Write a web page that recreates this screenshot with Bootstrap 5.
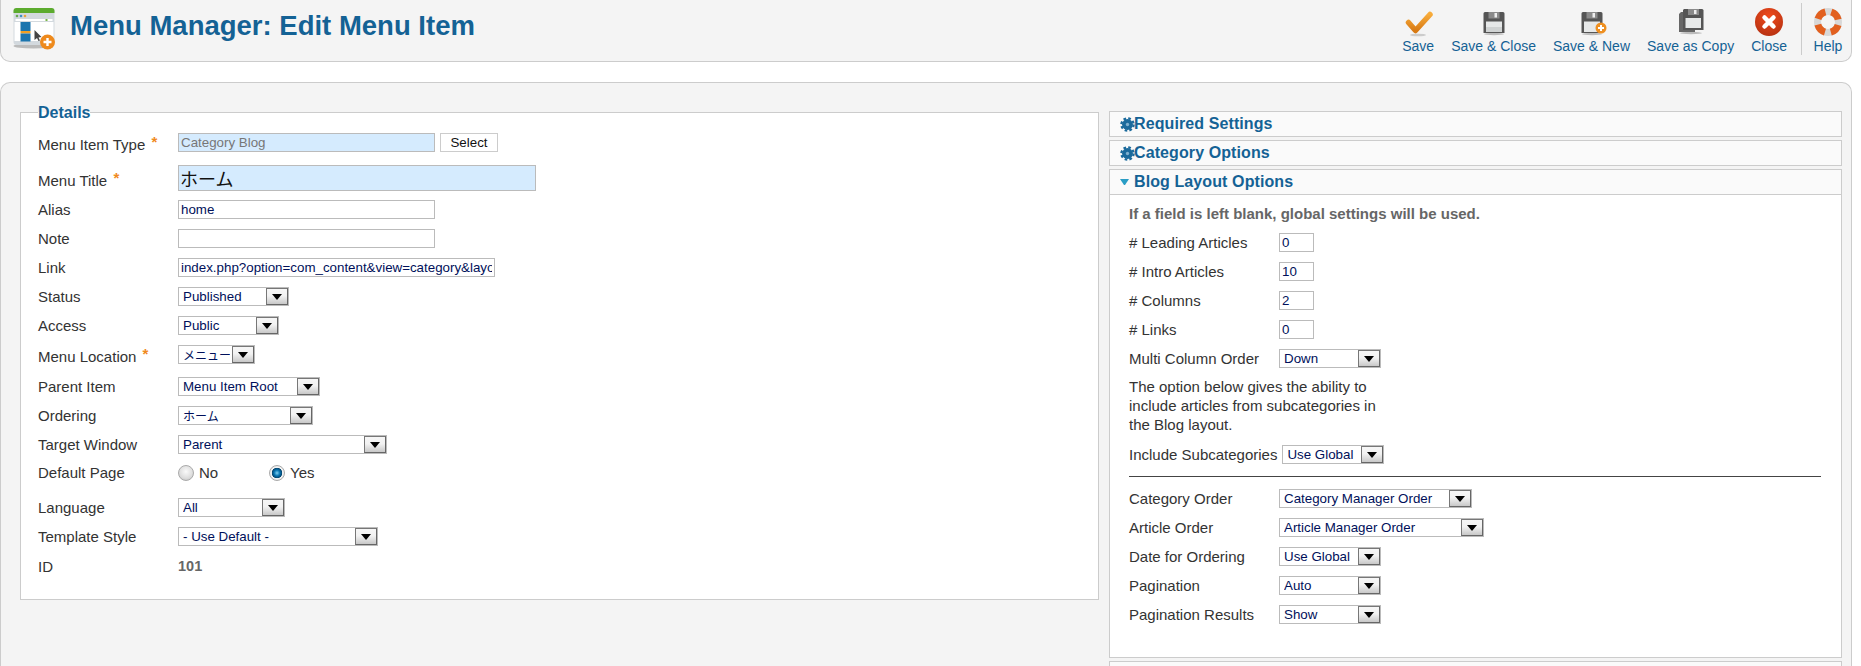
<!DOCTYPE html>
<html lang="en">
<head>
<meta charset="utf-8">
<title>Menu Manager: Edit Menu Item</title>
<link rel="stylesheet" href="https://cdn.jsdelivr.net/npm/bootstrap@5.3.0/dist/css/bootstrap.min.css">
<style>
html,body{height:666px;overflow:hidden;background:#fff}
body{font-family:"Liberation Sans",Arial,"Noto Sans CJK JP",sans-serif;font-size:15px;line-height:19px;color:#333}
.jp{font-family:"Noto Sans CJK JP","Liberation Sans",sans-serif}
.topbar{height:62px;width:1852px;background:#f4f4f4;border:1px solid #ccc;border-width:0 1px 1px 1px;border-radius:0 0 10px 10px}
.brand-logo{margin:8px 0 0 11px;width:45px;height:42px;flex:none}
.page-title{margin:11px 0 0 13px;font-size:27.5px;line-height:30px;font-weight:700;color:#146295}
.tools{margin-right:7px;gap:17px;height:61px}
.tool{color:#146295;font-size:14px;line-height:17px;text-decoration:none;padding-top:6px}
.tool svg{width:32px;height:32px;display:block}
.tool-help{border-left:1px solid #ccc;height:52px;margin-top:3px;padding:3px 0 0 10px;margin-left:-3px}
.workarea{margin-top:20px;width:1852px;height:600px;background:#f4f4f4;border:1px solid #ccc;border-bottom:0;border-radius:10px 10px 0 0;padding:19px 9px 0 19px;gap:10px}
.details-set{width:1079px;height:498px;flex:none;margin:0;padding:0 17px;background:#fff;border:1px solid #ccc}
.details-set legend{float:none;width:auto;height:20px;margin:0 0 11px;padding:0;font-size:16px;line-height:22px;font-weight:700;color:#146295}
.fld{min-height:19px;margin-bottom:10px}
.fld-9{margin-bottom:9px}
.fld-11{margin-bottom:11px}
.fld-13{margin-bottom:13px}
.fld-16{margin-bottom:16px}
.lbl{width:140px;flex:none;margin:0;color:#333;line-height:19px}
.lbl-r{width:150px}
.lbl-auto{width:auto;margin-right:5px}
.lbl-req{height:19px;line-height:23px}
.req{color:#f08a1d;font-weight:700;font-size:15px;line-height:10px;vertical-align:3px;margin-left:2px}
.form-control.tinput,.form-select.tselect{height:19px;min-height:0;padding:0 2px;border:1px solid #bbb;border-radius:0;font-size:13.33px;line-height:17px;color:#00105a;background-color:#fff;box-shadow:none}
.form-select.tselect{background-image:none;padding:0 24px 0 4px}
.form-control.tinput.ro{background:#d5ebfe;color:#777}
.form-control.tinput.big{height:26px;width:358px;background:#d5ebfe;font-size:18px;color:#111;padding:0 1px}
.w-type,.w-alias{width:257px}
.w-link{width:317px}
.w-num{width:35px}
.pickbtn.btn{width:58px;height:19px;margin-left:5px;padding:0;border:1px solid #ccc;border-radius:0;background:#fff;color:#111;font-size:13.33px;line-height:17px}
.pk{display:block;flex:none}
.p77{width:77px}.p101{width:101px}.p102{width:102px}.p107{width:107px}.p111{width:111px}.p135{width:135px}.p142{width:142px}.p193{width:193px}.p200{width:200px}.p205{width:205px}.p209{width:209px}
.pk select.jp{font-family:"Noto Sans CJK JP",sans-serif;font-size:12px}
.pk-arrow{top:1px;right:1px;bottom:1px;width:22px;border:1px solid #777;border-color:#777 #666 #666 #777;background:linear-gradient(#f6f6f6 0,#f2f2f2 45%,#c8c8c8 100%);pointer-events:none}
.pk-arrow::after{content:"";border:5px solid transparent;border-top:6px solid #000;border-bottom:0}
.radio-row{gap:5px}
.rad{appearance:none;width:16px;height:16px;margin:0;border-radius:50%;border:1px solid #aaa;background:radial-gradient(circle at 50% 40%,#fafafa 0,#ddd 60%,#bbb 100%);flex:none}
.rad:checked{background:radial-gradient(circle,#7fd0f0 0,#0a78b5 28%,#03456f 50%,#f4f4f4 56%,#d8d8d8 100%)}
.rad-lbl{width:65px;margin:0}
.id-val{font-weight:700;color:#666;font-size:14.5px}
.panels{width:733px;flex:none;margin-top:9px;gap:3px}
.pane{border:1px solid #ccc;background:#fafafa}
.pane-h{height:24px;padding-left:10px;font-size:16px;letter-spacing:.1px;font-weight:700;line-height:24px;color:#146295}
.pane-h svg{width:15px;height:15px;flex:none;margin-right:-1px}
.pane-h .tri{width:14px;flex:none}
.tri::before{content:"";display:block;border:4.5px solid transparent;border-top:6px solid #2a9dc5;border-bottom:0;width:9px}
.pane-b{border-top:1px solid #ccc;background:#fff;height:463px;padding:9px 19px 0}
.hint{font-weight:700;color:#666;font-size:15px;margin:0 0 9px;line-height:20px}
.note{width:265px;margin:0 0 11px}
.rule{margin:12px 1px 12px 0;border:0;border-top:1px solid #444;opacity:1}
</style>
</head>
<body>
<header class="topbar d-flex justify-content-between">
  <div class="d-flex">
    <svg class="brand-logo" viewBox="0 0 44 42" role="img" aria-label="Menu manager">
      <ellipse cx="21" cy="38" rx="20" ry="2.5" fill="#bbb"/>
      <rect x="1" y="0" width="41" height="37" rx="3" fill="#d3d9de"/>
      <path d="M1 5V3a3 3 0 0 1 3-3h35a3 3 0 0 1 3 3v2z" fill="#5cab2e"/>
      <circle cx="4.5" cy="8" r="1.3" fill="#6aa84f"/><circle cx="8.5" cy="8" r="1.3" fill="#3d8fc4"/><circle cx="12.5" cy="8" r="1.3" fill="#e8a33d"/>
      <rect x="3" y="11" width="37" height="2" fill="#fff"/><rect x="33" y="11" width="2" height="2" fill="#7ab648"/>
      <rect x="2" y="14" width="39" height="19" fill="#fff"/>
      <rect x="8" y="14" width="10" height="9" fill="#1b75ae"/><rect x="8" y="23" width="10" height="2.5" fill="#f0a023"/><rect x="8" y="25.500" width="10" height="8" fill="#1b75ae"/>
      <path d="M22 22l7 7-3 .5 1.500 3-1.500.5-1.500-3-2.500 2z" fill="#444"/>
      <circle cx="35" cy="34" r="7.500" fill="#ee8a1c"/><path d="M35 30v8M31 34h8" stroke="#fff" stroke-width="2.400"/>
    </svg>
    <h1 class="page-title">Menu Manager: Edit Menu Item</h1>
  </div>
  <nav class="tools d-flex align-items-start">
    <a class="tool d-flex flex-column align-items-center" href="#">
      <svg viewBox="0 0 32 32"><defs><linearGradient id="og" x1="0" y1="0" x2="0" y2="1"><stop offset="0" stop-color="#f7ab3a"/><stop offset="1" stop-color="#d87a14"/></linearGradient></defs><ellipse cx="16" cy="29" rx="8" ry="1.300" fill="#ccc"/><path d="M6.500 16.500l7 8L28 8.500" fill="none" stroke="url(#og)" stroke-width="5.500" stroke-linecap="round" stroke-linejoin="round"/></svg>
      Save</a>
    <a class="tool d-flex flex-column align-items-center" href="#">
      <svg viewBox="0 0 32 32"><ellipse cx="16" cy="28" rx="10" ry="1.200" fill="#bbb"/><path d="M7 6h18a1.500 1.500 0 0 1 1.500 1.500V27H5.500V7.500A1.500 1.500 0 0 1 7 6z" fill="#555"/><rect x="10.500" y="6" width="11" height="6.500" fill="#8a8a8a"/><rect x="16.500" y="7" width="2.500" height="4.500" fill="#eee"/><path d="M8 15.500h16V26H8z" fill="#e6e8e8"/><path d="M8 21h16v5H8z" fill="#cfd2d2"/></svg>
      Save &amp; Close</a>
    <a class="tool d-flex flex-column align-items-center" href="#">
      <svg viewBox="0 0 32 32"><ellipse cx="16" cy="28" rx="10" ry="1.200" fill="#bbb"/><path d="M7 6h18a1.500 1.500 0 0 1 1.500 1.500V27H5.500V7.500A1.500 1.500 0 0 1 7 6z" fill="#555"/><rect x="10.500" y="6" width="11" height="6.500" fill="#8a8a8a"/><rect x="16.500" y="7" width="2.500" height="4.500" fill="#eee"/><path d="M8 15.500h16V26H8z" fill="#e6e8e8"/><circle cx="25" cy="22" r="5.500" fill="#ee8f20"/><path d="M25 19v6M22 22h6" stroke="#fff" stroke-width="2"/></svg>
      Save &amp; New</a>
    <a class="tool d-flex flex-column align-items-center" href="#">
      <svg viewBox="0 0 32 32"><ellipse cx="16" cy="27" rx="11" ry="1.200" fill="#bbb"/><path d="M6 6h14v20H4V8z" fill="#666"/><path d="M9 3h18a1.500 1.500 0 0 1 1.500 1.500V24H8V4z" fill="#555"/><rect x="13" y="3" width="11" height="6" fill="#8a8a8a"/><rect x="19" y="4" width="2.500" height="4" fill="#eee"/><path d="M10.500 12h15.500v10H10.500z" fill="#e6e8e8"/></svg>
      Save as Copy</a>
    <a class="tool d-flex flex-column align-items-center" href="#">
      <svg viewBox="0 0 32 32"><defs><radialGradient id="rg" cx=".5" cy=".3" r=".8"><stop offset="0" stop-color="#f04a1c"/><stop offset="1" stop-color="#b12f10"/></radialGradient></defs><circle cx="16" cy="16" r="14" fill="url(#rg)"/><path d="M11.500 11.500l9 9M20.500 11.500l-9 9" stroke="#fff" stroke-width="4.500" stroke-linecap="round"/></svg>
      Close</a>
    <a class="tool tool-help d-flex flex-column align-items-center" href="#">
      <svg viewBox="0 0 32 32"><circle cx="16" cy="16" r="10.500" fill="none" stroke="#d8d8d8" stroke-width="7"/><circle cx="16" cy="16" r="10.500" fill="none" stroke="#e2601f" stroke-width="7" stroke-dasharray="10.500 6" stroke-dashoffset="-3"/></svg>
      Help</a>
  </nav>
</header>

<main class="workarea d-flex align-items-start">
  <fieldset class="details-set">
    <legend>Details</legend>
    <div class="fld fld-13 d-flex align-items-center"><label class="lbl lbl-req">Menu Item Type <span class="req">*</span></label><input class="form-control tinput ro w-type" value="Category Blog" readonly><button type="button" class="btn pickbtn">Select</button></div>
    <div class="fld fld-9 d-flex align-items-center"><label class="lbl lbl-req">Menu Title <span class="req">*</span></label><input class="form-control tinput big jp" value="ホーム"></div>
    <div class="fld d-flex align-items-center"><label class="lbl">Alias</label><input class="form-control tinput w-alias" value="home"></div>
    <div class="fld d-flex align-items-center"><label class="lbl">Note</label><input class="form-control tinput w-alias"></div>
    <div class="fld d-flex align-items-center"><label class="lbl">Link</label><input class="form-control tinput w-link" value="index.php?option=com_content&amp;view=category&amp;layout=blog&amp;id=9"></div>
    <div class="fld d-flex align-items-center"><label class="lbl">Status</label><span class="pk p111 position-relative"><select class="form-select tselect"><option>Published</option></select><span class="pk-arrow position-absolute d-flex align-items-center justify-content-center"></span></span></div>
    <div class="fld d-flex align-items-center"><label class="lbl">Access</label><span class="pk p101 position-relative"><select class="form-select tselect"><option>Public</option></select><span class="pk-arrow position-absolute d-flex align-items-center justify-content-center"></span></span></div>
    <div class="fld fld-13 d-flex align-items-center"><label class="lbl lbl-req">Menu Location <span class="req">*</span></label><span class="pk p77 position-relative"><select class="form-select tselect jp"><option>メニュー</option></select><span class="pk-arrow position-absolute d-flex align-items-center justify-content-center"></span></span></div>
    <div class="fld d-flex align-items-center"><label class="lbl">Parent Item</label><span class="pk p142 position-relative"><select class="form-select tselect"><option>Menu Item Root</option></select><span class="pk-arrow position-absolute d-flex align-items-center justify-content-center"></span></span></div>
    <div class="fld d-flex align-items-center"><label class="lbl">Ordering</label><span class="pk p135 position-relative"><select class="form-select tselect jp"><option>ホーム</option></select><span class="pk-arrow position-absolute d-flex align-items-center justify-content-center"></span></span></div>
    <div class="fld fld-9 d-flex align-items-center"><label class="lbl">Target Window</label><span class="pk p209 position-relative"><select class="form-select tselect"><option>Parent</option></select><span class="pk-arrow position-absolute d-flex align-items-center justify-content-center"></span></span></div>
    <div class="fld fld-16 d-flex align-items-center"><label class="lbl">Default Page</label><span class="d-flex align-items-center radio-row"><input class="rad" type="radio" name="dp"><label class="rad-lbl">No</label><input class="rad" type="radio" name="dp" checked><label class="rad-lbl">Yes</label></span></div>
    <div class="fld d-flex align-items-center"><label class="lbl">Language</label><span class="pk p107 position-relative"><select class="form-select tselect"><option>All</option></select><span class="pk-arrow position-absolute d-flex align-items-center justify-content-center"></span></span></div>
    <div class="fld fld-11 d-flex align-items-center"><label class="lbl">Template Style</label><span class="pk p200 position-relative"><select class="form-select tselect"><option>- Use Default -</option></select><span class="pk-arrow position-absolute d-flex align-items-center justify-content-center"></span></span></div>
    <div class="fld d-flex align-items-center"><label class="lbl">ID</label><span class="id-val">101</span></div>
  </fieldset>

  <aside class="panels d-flex flex-column">
    <section class="pane">
      <div class="pane-h d-flex align-items-center"><svg viewBox="0 0 16 16"><circle cx="8" cy="8" r="6.500" fill="none" stroke="#1b6a9c" stroke-width="2.500" stroke-dasharray="2.800 2.305"/><circle cx="8" cy="8" r="5.800" fill="#1b6a9c"/><circle cx="8" cy="8" r="1.800" fill="#7fb0cf"/></svg>Required Settings</div>
    </section>
    <section class="pane">
      <div class="pane-h d-flex align-items-center"><svg viewBox="0 0 16 16"><circle cx="8" cy="8" r="6.500" fill="none" stroke="#1b6a9c" stroke-width="2.500" stroke-dasharray="2.800 2.305"/><circle cx="8" cy="8" r="5.800" fill="#1b6a9c"/><circle cx="8" cy="8" r="1.800" fill="#7fb0cf"/></svg>Category Options</div>
    </section>
    <section class="pane">
      <div class="pane-h d-flex align-items-center"><span class="tri"></span>Blog Layout Options</div>
      <div class="pane-b">
        <p class="hint">If a field is left blank, global settings will be used.</p>
        <div class="fld d-flex align-items-center"><label class="lbl lbl-r"># Leading Articles</label><input class="form-control tinput w-num" value="0"></div>
        <div class="fld d-flex align-items-center"><label class="lbl lbl-r"># Intro Articles</label><input class="form-control tinput w-num" value="10"></div>
        <div class="fld d-flex align-items-center"><label class="lbl lbl-r"># Columns</label><input class="form-control tinput w-num" value="2"></div>
        <div class="fld d-flex align-items-center"><label class="lbl lbl-r"># Links</label><input class="form-control tinput w-num" value="0"></div>
        <div class="fld fld-9 d-flex align-items-center"><label class="lbl lbl-r">Multi Column Order</label><span class="pk p102 position-relative"><select class="form-select tselect"><option>Down</option></select><span class="pk-arrow position-absolute d-flex align-items-center justify-content-center"></span></span></div>
        <p class="note">The option below gives the ability to include articles from subcategories in the Blog layout.</p>
        <div class="fld m-0 d-flex align-items-center"><label class="lbl lbl-auto">Include Subcategories</label><span class="pk p102 position-relative"><select class="form-select tselect"><option>Use Global</option></select><span class="pk-arrow position-absolute d-flex align-items-center justify-content-center"></span></span></div>
        <hr class="rule">
        <div class="fld d-flex align-items-center"><label class="lbl lbl-r">Category Order</label><span class="pk p193 position-relative"><select class="form-select tselect"><option>Category Manager Order</option></select><span class="pk-arrow position-absolute d-flex align-items-center justify-content-center"></span></span></div>
        <div class="fld d-flex align-items-center"><label class="lbl lbl-r">Article Order</label><span class="pk p205 position-relative"><select class="form-select tselect"><option>Article Manager Order</option></select><span class="pk-arrow position-absolute d-flex align-items-center justify-content-center"></span></span></div>
        <div class="fld d-flex align-items-center"><label class="lbl lbl-r">Date for Ordering</label><span class="pk p102 position-relative"><select class="form-select tselect"><option>Use Global</option></select><span class="pk-arrow position-absolute d-flex align-items-center justify-content-center"></span></span></div>
        <div class="fld d-flex align-items-center"><label class="lbl lbl-r">Pagination</label><span class="pk p102 position-relative"><select class="form-select tselect"><option>Auto</option></select><span class="pk-arrow position-absolute d-flex align-items-center justify-content-center"></span></span></div>
        <div class="fld d-flex align-items-center"><label class="lbl lbl-r">Pagination Results</label><span class="pk p102 position-relative"><select class="form-select tselect"><option>Show</option></select><span class="pk-arrow position-absolute d-flex align-items-center justify-content-center"></span></span></div>
      </div>
    </section>
    <section class="pane">
      <div class="pane-h"></div>
    </section>
  </aside>
</main>
<script src="https://cdn.jsdelivr.net/npm/bootstrap@5.3.0/dist/js/bootstrap.bundle.min.js"></script>
</body>
</html>
